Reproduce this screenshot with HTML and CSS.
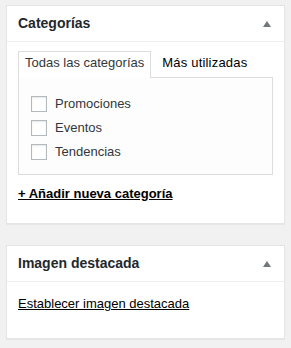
FILE: index.html
```html
<!DOCTYPE html>
<html lang="es">
<head>
<meta charset="utf-8">
<title>Categorías</title>
<link rel="stylesheet" href="styles.css">
</head>
<body>
<div class="postbox">
  <div class="hndle">
    <h2 class="hndle-title">Categorías</h2>
    <span class="toggle"></span>
  </div>
  <div class="inside inside-cat">
    <ul class="tabs">
      <li class="tab tab-active">Todas las categorías</li>
      <li class="tab">Más utilizadas</li>
    </ul>
    <div class="tabs-panel">
      <ul class="checklist">
        <li class="check-row"><label class="check-label"><input class="check" type="checkbox">Promociones</label></li>
        <li class="check-row"><label class="check-label"><input class="check" type="checkbox">Eventos</label></li>
        <li class="check-row"><label class="check-label"><input class="check" type="checkbox">Tendencias</label></li>
      </ul>
    </div>
    <p class="add-line"><a class="add-link" href="#">+ Añadir nueva categoría</a></p>
  </div>
</div>
<div class="postbox">
  <div class="hndle">
    <h2 class="hndle-title">Imagen destacada</h2>
    <span class="toggle"></span>
  </div>
  <div class="inside inside-img">
    <p class="img-line"><a class="img-link" href="#">Establecer imagen destacada</a></p>
  </div>
</div>
</body>
</html>
```
FILE: styles.css
```css
html, body {
  margin: 0;
  background: #f1f1f1;
}
body {
  padding: 5px 6px 0;
  font-family: "Liberation Sans", Arial, sans-serif;
  font-size: 13px;
  line-height: 19px;
  color: #32373c;
}
.postbox {
  background: #fff;
  border: 1px solid #e5e5e5;
  box-shadow: 0 1px 1px rgba(0, 0, 0, 0.04);
  margin-bottom: 21px;
}
.hndle {
  display: flex;
  align-items: center;
  justify-content: space-between;
  height: 35px;
  padding: 0 13px 0 11px;
  border-bottom: 1px solid #eee;
}
.hndle-title {
  margin: 0;
  font-size: 14px;
  font-weight: 700;
  line-height: 35px;
  color: #23282d;
}
.toggle {
  width: 0;
  height: 0;
  border-left: 4px solid transparent;
  border-right: 4px solid transparent;
  border-bottom: 6px solid #72777c;
}
.inside-cat {
  padding: 9px 11px 20px;
}
.inside-img {
  padding: 12px 11px 25px;
}
.tabs {
  display: flex;
  margin: 0 0 -1px;
  padding: 0;
  list-style: none;
}
.tab {
  padding: 2px 5px 6px 10px;
  line-height: 18px;
  border: 1px solid transparent;
  border-bottom: none;
  color: #000;
  letter-spacing: 0.2px;
}
.tab-active {
  position: relative;
  padding: 2px 6px 6px 6px;
  border-color: #ddd;
  background: #fff;
  color: #32373c;
  letter-spacing: 0;
}
.tabs-panel {
  border: 1px solid #ddd;
  background: #fdfdfd;
  padding: 14px 12px 10px;
}
.checklist {
  margin: 0;
  padding: 0;
  list-style: none;
}
.check-row {
  height: 24px;
}
.check-label {
  display: flex;
  align-items: center;
  height: 24px;
  line-height: 24px;
}
.check {
  appearance: none;
  -webkit-appearance: none;
  width: 16px;
  height: 16px;
  margin: 0 8px 0 0;
  border: 1px solid #b4b9be;
  background: #fff;
  box-shadow: inset 0 1px 2px rgba(0, 0, 0, 0.1);
  box-sizing: border-box;
}
.add-line {
  margin: 9px 0 0;
}
.add-link {
  font-weight: 700;
  color: #000;
  text-decoration: underline;
}
.img-line {
  margin: 0;
}
.img-link {
  color: #000;
  text-decoration: underline;
}
```
